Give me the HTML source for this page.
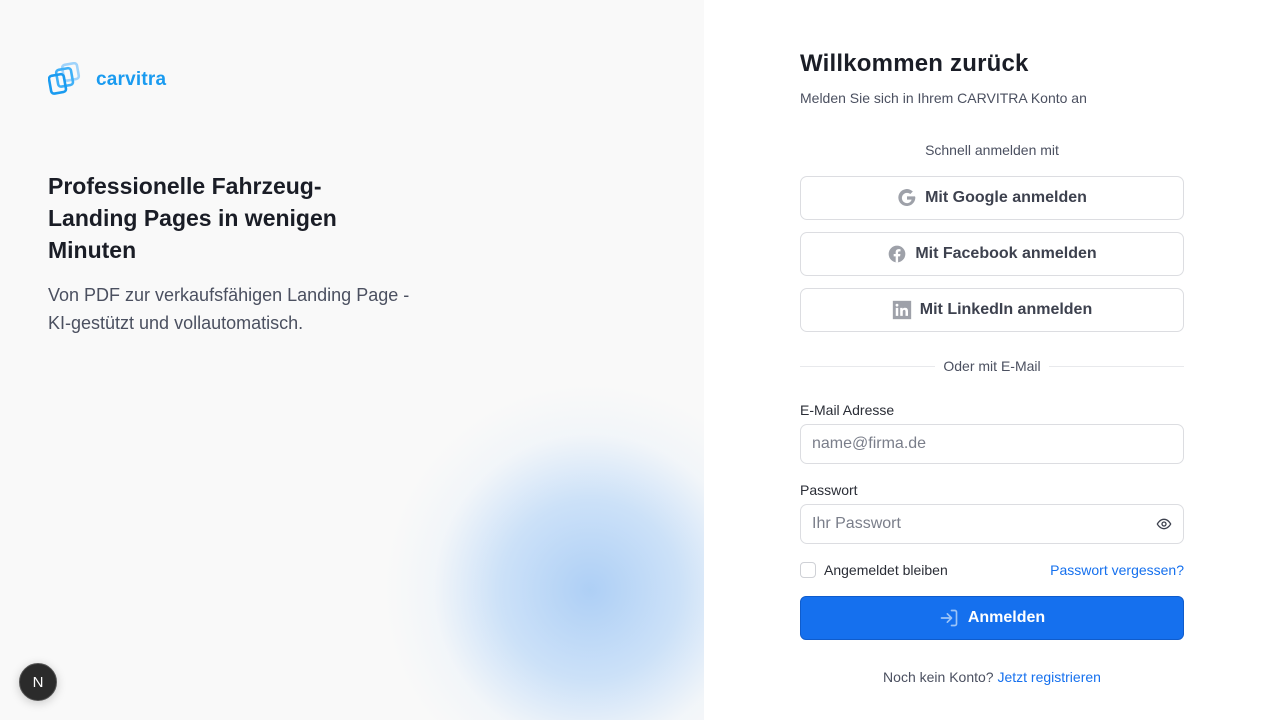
<!DOCTYPE html>
<html><head><meta charset="utf-8"><style>
*{box-sizing:border-box;margin:0;padding:0}
html,body{overflow:hidden}
body{width:1280px;height:720px;font-family:"Liberation Sans",sans-serif;background:#fff;position:relative;color:#1a1d26}
.left{position:absolute;left:0;top:0;width:704px;height:720px;background:#f9f9f9;overflow:hidden}
.glow{position:absolute;left:300px;top:300px;width:580px;height:580px;border-radius:50%;background:radial-gradient(circle at 50% 50%,rgba(170,205,245,.95) 0,rgba(185,215,248,.7) 22%,rgba(225,237,250,.3) 38%,rgba(245,248,252,0) 50%)}
.glow2{position:absolute;left:300px;top:300px;width:580px;height:580px;border-radius:50%;background:radial-gradient(circle at 50% 50%,rgba(255,255,255,.6) 30%,rgba(255,255,255,.4) 42%,rgba(255,255,255,0) 50%)}
.logo{position:absolute;left:48px;top:62px;display:flex;align-items:center}
.logo span{color:#1a9bf0;font-weight:700;font-size:19px;margin-left:14px;letter-spacing:.2px}
h2{position:absolute;left:48px;top:170px;width:330px;font-size:23px;line-height:32px;font-weight:700;color:#1a1d26}
.sub{position:absolute;left:48px;top:281px;font-size:18px;line-height:28px;color:#4b5060;width:385px}
.nb{position:absolute;left:19px;top:663px;width:38px;height:38px;border-radius:50%;background:#2b2b2b;border:1.5px solid #555;color:#fff;font-size:15px;display:flex;align-items:center;justify-content:center;box-shadow:0 2px 10px rgba(0,0,0,.2)}
.r{position:absolute;left:800px;top:0;width:384px;height:720px}
h1{position:absolute;top:50px;font-size:24px;font-weight:700;color:#1a1d26;white-space:nowrap;letter-spacing:.2px}
.p{position:absolute;top:90px;font-size:14px;color:#4b5060;white-space:nowrap}
.c{position:absolute;width:384px;text-align:center;font-size:14px;color:#4b5060}
.btn{position:absolute;width:384px;height:44px;border:1.5px solid #dcdde1;border-radius:7px;background:#fff;display:flex;align-items:center;justify-content:center;font-size:16px;font-weight:700;color:#3d414e;gap:8px}
.div{position:absolute;top:366px;width:384px;height:1px;background:#e8e9ec}
.lbl{position:absolute;font-size:14px;color:#2a2d36}
.inp{position:absolute;width:384px;height:40px;border:1.5px solid #dcdde1;border-radius:7px;padding-left:11px;display:flex;align-items:center;font-size:16px;color:#7a7e8a}
.sig{position:absolute;top:596px;width:384px;height:44px;background:#1570ee;border:1px solid #0f5ccc;border-radius:6px;color:#fff;font-weight:700;font-size:16px;display:flex;align-items:center;justify-content:center;gap:9px}
a{color:#1570ee;text-decoration:none}
</style></head><body>
<div class="left">
<div class="glow"></div><div class="glow2" style="opacity:0"></div>
<div class="logo"><svg width="34" height="36" viewBox="0 0 34 36" fill="none" stroke-width="2.6" stroke-linejoin="round"><rect x="15" y="2" width="15" height="16" rx="3" stroke="#9fd3fb" transform="rotate(-10 22 10)"/><rect x="9" y="7" width="15" height="17" rx="3" stroke="#3fb0f7" transform="rotate(-10 16 15)"/><rect x="2" y="13" width="15" height="18" rx="3" stroke="#1a9bf0" transform="rotate(-10 9 22)"/></svg><span>carvitra</span></div>
<h2>Professionelle Fahrzeug-Landing Pages in wenigen Minuten</h2>
<div class="sub">Von PDF zur verkaufsfähigen Landing Page - KI-gestützt und vollautomatisch.</div>
</div>
<div class="nb">N</div>
<div class="r">
<h1>Willkommen zurück</h1>
<div class="p">Melden Sie sich in Ihrem CARVITRA Konto an</div>
<div class="c" style="top:142px">Schnell anmelden mit</div>
<div class="btn" style="top:176px"><svg width="20" height="20" viewBox="0 0 24 24"><path fill="#9ea1a9" d="M21.6 10H12v4h5.5c-.6 2.6-2.8 4.2-5.5 4.2a6.2 6.2 0 1 1 4-11l3-3A10.2 10.2 0 1 0 22 12c0-.7-.1-1.4-.4-2z"/></svg>Mit Google anmelden</div>
<div class="btn" style="top:232px"><svg width="20" height="20" viewBox="0 0 24 24"><circle cx="12" cy="12" r="10" fill="#9ea1a9"/><path fill="#fff" d="M13.3 22v-7.2h2.4l.4-2.8h-2.8v-1.8c0-.8.3-1.4 1.4-1.4h1.5V6.3c-.3 0-1.2-.1-2.2-.1-2.2 0-3.6 1.300-3.6 3.7V12H8v2.8h2.4V22z"/></svg>Mit Facebook anmelden</div>
<div class="btn" style="top:288px"><svg width="20" height="20" viewBox="0 0 24 24"><rect x="1" y="1" width="22" height="22" fill="#9ea1a9"/><path fill="#fff" d="M4.5 9.5h3v9.5h-3zM6 4.5a1.7 1.7 0 1 1 0 3.4 1.7 1.7 0 0 1 0-3.4zM9.8 9.5h2.9v1.3c.4-.8 1.4-1.5 2.9-1.5 3 0 3.6 2 3.6 4.6V19h-3v-4.6c0-1.1 0-2.5-1.5-2.5s-1.8 1.2-1.8 2.4V19h-3z"/></svg>Mit LinkedIn anmelden</div>
<div class="div"></div>
<div class="c" style="top:358px"><span style="background:#fff;padding:0 8px">Oder mit E-Mail</span></div>
<div class="lbl" style="top:402px">E-Mail Adresse</div>
<div class="inp" style="top:424px">name@firma.de</div>
<div class="lbl" style="top:482px">Passwort</div>
<div class="inp" style="top:504px">Ihr Passwort<svg style="position:absolute;right:11px" width="16" height="16" viewBox="0 0 24 24" fill="none" stroke="#3d414e" stroke-width="2"><path d="M2 12s3.5-7 10-7 10 7 10 7-3.5 7-10 7S2 12 2 12z"/><circle cx="12" cy="12" r="3"/></svg></div>
<div style="position:absolute;top:562px;width:16px;height:16px;border:1.5px solid #cfd1d6;border-radius:4px"></div>
<div class="lbl" style="top:562px;left:24px">Angemeldet bleiben</div>
<div class="lbl" style="top:562px;right:0"><a>Passwort vergessen?</a></div>
<div class="sig"><svg width="20" height="20" viewBox="0 0 24 24" fill="none" stroke="#9cc4f7" stroke-width="2" stroke-linecap="round" stroke-linejoin="round"><path d="M15 3h4a2 2 0 0 1 2 2v14a2 2 0 0 1-2 2h-4M10 17l5-5-5-5M15 12H3"/></svg>Anmelden</div>
<div class="c" style="top:669px">Noch kein Konto? <a>Jetzt registrieren</a></div>
</div>
</body></html>
